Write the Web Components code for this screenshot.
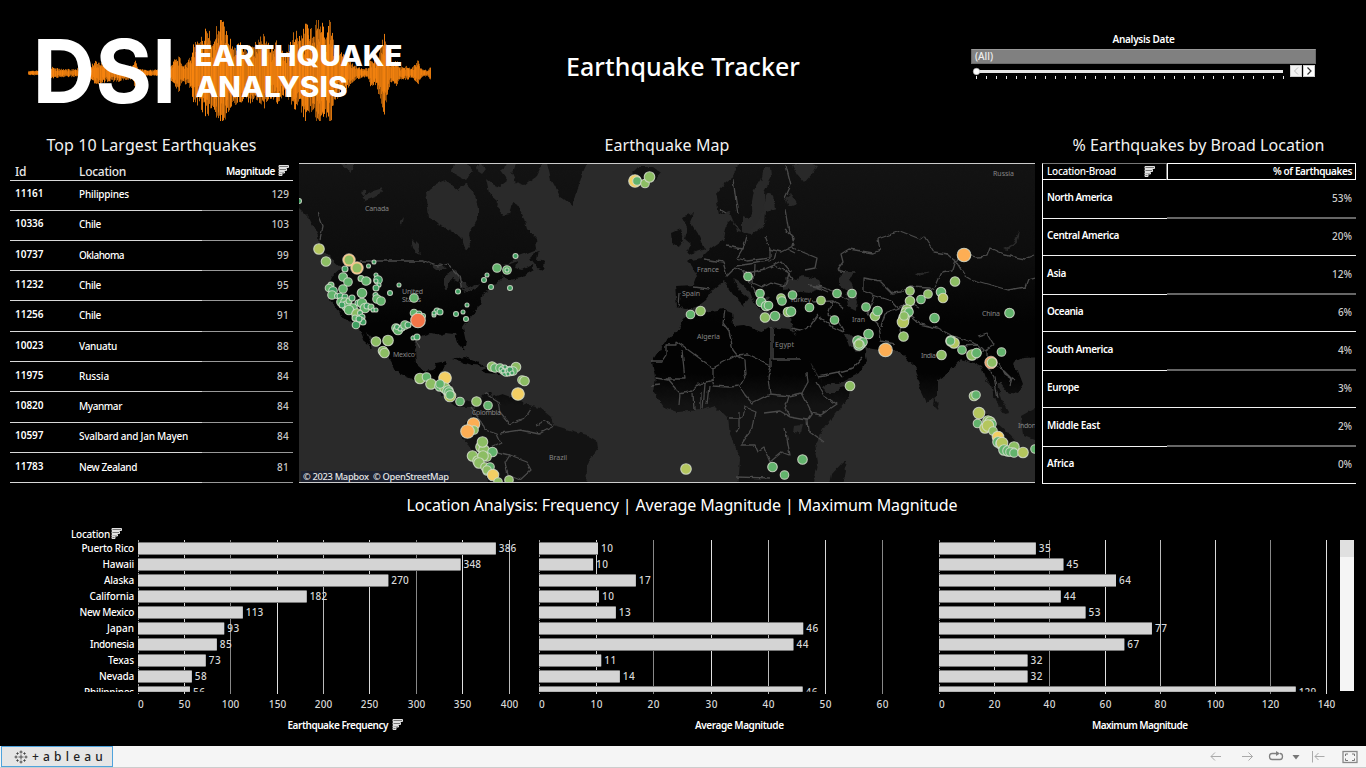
<!DOCTYPE html>
<html lang="en">
<head>
<meta charset="utf-8">
<title>Earthquake Tracker</title>
<style>
html,body{margin:0;padding:0;background:#000}
body{width:1366px;height:768px;overflow:hidden;color:#fff;font:500 10px/14px "Noto Sans","Open Sans",sans-serif}
</style>
</head>
<body>
<quake-dashboard></quake-dashboard>
<script>
const define = (name, css, render, after) => customElements.define(name, class extends HTMLElement {
  connectedCallback() {
    if (this.shadowRoot) return;
    this.attachShadow({ mode: 'open' }).innerHTML = `<style>${css}</style>${render(this)}`;
    if (after) after(this);
  }
});

/* Inline label whose tracking is adjusted so it takes the given width */
define('fit-text', ':host{display:inline-block;white-space:nowrap}span{display:inline-block}',
  () => '<span><slot></slot></span>',
  el => {
    const w = +el.getAttribute('w');
    if (!w) return;
    const natural = el.shadowRoot.querySelector('span').getBoundingClientRect().width;
    el.style.letterSpacing = ((w - natural) / el.textContent.length).toFixed(3) + 'px';
  });
const fit = (t, w) => `<fit-text w="${w}">${t}</fit-text>`;

define('sort-icon', ':host{display:inline-block;width:11px;height:11px}svg{display:block}',
  () => `<svg width="11" height="11" viewBox="0 0 11 11"><g fill="#777" stroke="#e2e2e2" stroke-width="1"><path d="M1 .5H10.5V2.5H1zM1 3.5H8.5V5.5H1zM1 6.500H6.500V8H1zM1 8.500H4V10.500H1z"/></g></svg>`);

/* Logo: seismic trace behind the wordmark */
define('dsi-logo', ':host{display:block;width:440px;height:130px}svg{display:block;font-family:Inter,"Noto Sans",sans-serif;fill:#fff}',
  () => {
    const env = [[28,2],[45,3],[52,6],[60,4],[75,4],[90,7],[96,12],[105,9],[118,9],[125,7],[133,8],[135,16],[138,4],[150,3],[165,4],[171,7],[175,14],[179,19],[183,9],[187,12],[191,18],[193,30],[200,34],[207,46],[212,34],[217,46],[219,56],[222,56],[227,40],[233,33],[240,30],[247,28],[255,30],[263,38],[270,26],[277,32],[284,22],[291,30],[295,46],[300,34],[306,50],[313,44],[318,60],[321,60],[325,38],[329,60],[331,56],[334,28],[340,22],[346,17],[354,8],[363,4],[368,5],[371,14],[376,12],[381,28],[385,43],[388,20],[391,9],[396,14],[400,6],[407,7],[412,5],[418,13],[421,5],[428,3],[430,7]];
    let s = 7, rnd = () => (s = (s * 16807) % 2147483647) / 2147483647, out = '';
    for (let x = 28.5; x < 431; x += 1) {
      let i = 1; while (i < env.length - 1 && env[i][0] < x) i++;
      const [x0, a0] = env[i - 1], [x1, a1] = env[i], a = a0 + (a1 - a0) * Math.min(1, (x - x0) / (x1 - x0));
      const seg = (lo, hi, op) => {
        const u = Math.min(53, a * (lo + hi * rnd())), d = Math.min(48, a * (lo + hi * rnd()));
        out += `<path d="M${x} ${(73 - u).toFixed(1)}V${(73 + d).toFixed(1)}" stroke="#f9850f" opacity="${op.toFixed(2)}"/>`;
      };
      seg(.7, .36, .5 + .5 * rnd());
      seg(.4, .4, .7);
    }
    return `<svg width="440" height="130" viewBox="0 0 440 130">${out}
    <text x="32.500" y="103" font-size="88" font-weight="700" textLength="144" lengthAdjust="spacingAndGlyphs">DSI</text>
    <text x="194.500" y="65.500" font-size="28.500" font-weight="800" textLength="208" lengthAdjust="spacingAndGlyphs">EARTHQUAKE</text>
    <text x="195.500" y="97" font-size="28.500" font-weight="800" textLength="152" lengthAdjust="spacingAndGlyphs">ANALYSIS</text></svg>`;
  });

define('date-filter', `:host{display:flex;flex-direction:column;width:345px}
.t{font-weight:600;text-align:center;height:17px;line-height:15px}
.in{box-sizing:border-box;height:15px;background:#808080;border:1px solid #6a6a6a;border-top-color:#999;padding-left:3px;line-height:13px;color:#eee}
.row{display:flex;gap:1px}svg{display:block}`,
  () => {
    let ticks = '';
    for (let i = 0; i < 32; i++) ticks += `<rect x="${(5 + i * 9.89).toFixed(0)}" y="12" width="1" height="3"/>`;
    return `<div class="t">${fit('Analysis Date', 62)}</div><div class="in">${fit('(All)', 18)}</div>
    <div class="row"><svg width="345" height="16" viewBox="0 0 345 16"><g fill="#e6e6e6"><rect x="6" y="6" width="306" height="3"/>${ticks}</g>
    <circle cx="5.500" cy="7.500" r="3.200" fill="#fff" stroke="#bbb" stroke-width=".6"/>
    <rect x="319.500" y="1.500" width="11" height="11" fill="#f3f3f3" stroke="#ccc"/><rect x="332.500" y="1.500" width="11" height="11" fill="#fff" stroke="#ccc"/>
    <path d="M327 3.500L323.500 7L327 10.500" fill="none" stroke="#bbb"/><path d="M336.500 3.500L340 7L336.500 10.500" fill="none" stroke="#333" stroke-width="1.200"/></svg></div>`;
  });

define('panel-title', ':host{display:block;height:33px;line-height:31px;font-size:16px;font-weight:400;text-align:center;color:#f2f2f2}', () => '<slot></slot>');

define('top-table', `:host{display:block;width:283px}
.r{display:grid;grid-template-columns:64px 128px 91px;height:30.270px;align-items:stretch}
.r>*{box-sizing:border-box;border-bottom:1px solid #d8d8d8;padding-left:5px;line-height:30.500px}
.r .m{border-color:#999;text-align:right;padding:0 4px 0 0;color:#c8c8c8}
.r .i{font-weight:600;line-height:29.500px}
.h{height:16.200px}.h>*{line-height:17px!important;font-size:12px;color:#e8e8e8;font-weight:500}.h .m{font-size:10px;font-weight:600;color:#fff;border-color:#ddd;display:flex;justify-content:flex-end;gap:3px;line-height:17px!important}.h sort-icon{margin-top:2px}`,
  () => {
    const rows = [['11161','Philippines',50,129],['10336','Chile',22,103],['10737','Oklahoma',45,99],['11232','Chile',22,95],['11256','Chile',22,91],['10023','Vanuatu',38,88],['11975','Russia',30,84],['10820','Myanmar',43,84],['10597','Svalbard and Jan Mayen',109,84],['11783','New Zealand',58,81]];
    return `<div class="r h"><div>${fit('Id', 11)}</div><div>${fit('Location', 47)}</div><div class="m">${fit('Magnitude', 49)}<sort-icon></sort-icon></div></div>` +
      rows.map(([i, l, w, m]) => `<div class="r"><div class="i">${fit(i, 28.5)}</div><div>${fit(l, w)}</div><div class="m">${fit(m, m > 99 ? 17.5 : 12)}</div></div>`).join('');
  });

define('share-table', `:host{display:block;width:314px}
.r{display:grid;grid-template-columns:125px 189px;height:37.980px}
.r>*{box-sizing:border-box;border-bottom:1px solid #f2f2f2;line-height:37px;padding-left:4px}
.r .l{border-left:1px solid #fff;font-weight:600}.r .v{text-align:right;padding-right:4px;color:#ccc;line-height:38px}
.r.thick .v{border-bottom:2px solid #666}
.h{height:16px}.h .l{border:1px solid #777;border-left-color:#fff;border-bottom-color:#fff;display:flex;justify-content:space-between;padding-right:11px;line-height:15px;font-weight:500}.h .l sort-icon{margin-top:2px}
.h .v{border:1px solid #fff;line-height:15px;font-weight:600;color:#fff;padding-right:3px}`,
  () => {
    const rows = [['North America',65,53],['Central America',72,20],['Asia',19,12],['Oceania',36,6],['South America',66,4],['Europe',32,3],['Middle East',53,2],['Africa',27,0]];
    return `<div class="r h"><div class="l">${fit('Location-Broad', 69)}<sort-icon></sort-icon></div><div class="v">${fit('% of Earthquakes', 79)}</div></div>` +
      rows.map(([l, w, v], i) => `<div class="r${i % 2 ? '' : ' thick'}"><div class="l">${fit(l, w)}</div><div class="v">${fit(v + '%', v > 9 ? 20 : 14)}</div></div>`).join('');
  });

/* World map with the epicentres */
const C = { d: '#3e9f61', g: '#62b36c', y: '#8cbd63', l: '#b4c65e', e: '#f3cf63', o: '#fdae54', r: '#f47448' };
const QUAKES = `299 201 2.5 d,319 249 5 l,326 261.500 4.500 y,345 276 2 d,345 269 3 d,349 260 6 O,357 268 6 O,374 262 2 d,368.500 266 2 d,343 277 4 g,361 278.500 3 g,368 281 3 d,366 281 4 g,376 275 2 d,378 280 4 d,376 281 2 d,379 285 2 d,376 288 3 d,390 293 2.500 d,399 285 2 d,348 282 4 g,343 289 4 g,331 285 3 g,329 288 3.500 g,333 291 4 d,332 295 4 g,337 296 2.500 d,340 296 3 d,345 297 3 d,362 293 4.500 g,375.500 295 2.500 d,377 299 4 g,381 301 4 g,414 298 4 g,341 302 4 g,345 302 4 g,347 306 5 g,349 301 3 g,352 298 3 d,342 305 3 d,358 303 3 d,353 308 4 g,349 310 4.500 g,362 303 4.500 g,365 308 4.500 g,367 306 3 d,371 307 3 g,373 310 2 d,376 310 2 d,357 314 5 y,355 318 3 g,360 313 2.500 d,362 317 3 d,361 320 3 d,356 325 3.500 d,363 322 3 d,359 319 3 d,414 313 3.500 g,419 314 3 d,423 316 2.500 d,418 320.500 7 r,434 315 2 d,437 311 3 d,440 312 3 d,434 313 2 d,456 314 2.500 d,463 312 2 d,467 305 2 d,466 319 2.500 d,458 291.500 2.500 d,484 280 2.500 d,487 275 2 d,491 287 2.500 d,497 268 4 g,507 270 4 g,507 270 2 d,515.500 256 2.500 d,510 288 2.500 d,396 328 4 g,398 330 4.500 g,402 328 3 d,405 325 4 g,408 325 3 d,397 327 2.500 d,400 329 2 d,413 338 2 d,417 337 3 d,376 341.500 4.500 y,388 340.500 5 y,383 351 4.500 y,384.500 353 4.500 y,420 378.500 5 y,426.500 377 4 g,445 378 6 e,431 384 5 y,440 386 5 g,445 388 5 y,448 391 5 g,450 396 5.500 l,449 392 4 g,450 395 4 g,440 384 4 g,460 401.500 4 g,476.500 401.500 4.500 y,488 405.500 4 g,492 366.500 4.500 y,495 368 4 g,516 367 4.500 y,500 368 4 g,504 370 4.500 g,506 372 4 d,510 371 4.500 d,513 371 4 g,510 370 3 d,505 367 2 d,501 369 2 d,508 374 2 d,512 373 2 d,503 371 2 d,522 380 4 y,524.500 381 4.500 y,518 394 6 e,473.500 424 6 o,474 430 4 y,467.500 431.500 6.500 o,481 447 5 y,484 450 5 y,482.500 442 5 y,492.500 452 4.500 g,487 457 4 y,472.500 456 5 y,478 461 5 y,483 456 5 y,479 463 5 y,485 467 4 y,487 471 4 g,490 467 4 g,487 470 4 y,493 475 5.500 e,498 482 4 y,509 480 4 y,635 181 6 e,637 181 4 g,645 183.500 4 y,649.500 177 5 y,748 276.500 4 g,690.500 314.500 4 g,700.500 311 4.500 y,760 293.500 4 g,761 302 4.500 g,766 306 4.500 g,768.500 305.500 4 g,781 298 4 y,782 301 4 g,765 317.500 4.500 y,775 316 4.500 g,788 312 4.500 y,791 311.500 4.500 g,792.500 295 4 g,809.500 307.500 4 g,821 300.500 4 y,837 293.500 4 g,852 293.500 4 g,834.500 320 4 g,866 307 4 g,875 316 4.500 y,877.500 311 4.500 g,910 291 4 y,910 301 4.500 y,921 299.500 4 g,928 294 4 y,941 292 4.500 g,943 298 4.500 l,955 281.500 4.500 y,964 255 6.500 o,1009.500 313 4.500 g,907 310 5 y,906 313 5 y,909 312 4 g,904 318 5 y,903 322 5.500 l,904 316 4 y,934.500 318 4.500 g,903.500 336.500 4.500 y,868.500 334 4.500 g,858 341 5 g,861 343 5 y,863 342 4 g,859 345 5 g,859 344 4 y,885.500 350 6.500 o,941.500 355 4.500 y,951 341 5 g,954 343 5 l,950.500 341 4 g,962 350 4 g,972 355 5 y,976.500 353 4.500 g,1001.500 352 4 g,991 362.500 6 P,992 362.500 4.500 y,974 396 4.500 y,976 395 4 g,979 413 5.500 l,977.500 423.500 4 g,988 421 5 y,990 422 5 y,992 424 4 g,985 428 5 l,988 425.500 5.500 l,993 431 4 y,998 437 5.500 e,998 442 5 g,1001 444 5 g,1002 443 5.500 l,1004 450 5 g,1008 451 5 g,1014 447 5 y,1013 452 4 g,1010 452 4 g,1014 453 4 g,1023 452.500 5 l,1035 449 4 g,850 386 4.500 y,802.500 459.500 4.500 g,772.500 467 4.500 g,784.500 475 4 g,686 469 5 l`;
define('quake-map', ':host{display:block;width:736px;height:320px}svg{display:block;font:7px "Noto Sans",sans-serif}',
  () => {
    const land = [
      /* Americas */
      'M290 155H520L500 170 508 181 500 187 492 184 486 179 489 193 498 201 497 208 503 215 509 214 512 203 519 207 523 215 527 229 536 239 537 249 527 253 518 256 511 262 502 266 513 263 517 261 515 267 523 269 532 264 534 270 520 278 510 280 503 277 495 284 488 291 483 294 480 304 476 311 469 319 463 328 466 342 464 350 459 345 455 334 446 333 440 335 431 333 422 336 417 340 415 350 416 364 424 371 433 370 436 363 446 361 443 370 437 377 447 376 451 383 453 392 460 403 470 401 477 405 483 396 491 391 493 397 502 394 514 398 528 405 540 408 551 417 553 425 570 430 587 435 597 441 598 449 590 460 587 466 586 490H492L482 467 472 451 463 437 466 424 473 417 474 407 465 407 456 407 446 399 438 390 424 384 407 377 395 371 390 361 383 353 375 342 366 332 372 348 365 342 360 330 352 323 342 317 337 308 330 299 328 288 332 277 342 268 331 258 319 247 318 236 309 218 299 208 290 204Z',
      'M520 155H547L537 176 524 186 516 183 512 174Z',
      'M545 155H591L583 172 578 188 573 206 560 196 551 180Z',
      'M530 259L539 250 537 260 545 262 543 270 537 268Z','M452 359L464 357 474 361 485 366 472 365 460 361Z','M482 369L492 365 505 370 498 374 485 373Z',
      /* Europe and Asia */
      'M743 155H1045V357L1022 358 1013 363 1018 371 1023 384 1017 394 1007 392 1001 384 997 384 1003 402 1009 413 1005 414 995 401 991 384 985 378 981 366 973 362 961 359 948 373 937 381 937 396 927 403 920 388 914 366 904 357 899 351 879 350 867 348 858 342 849 334 845 334 849 346 857 352 864 347 867 361 858 374 839 384 826 390 818 374 804 352 793 329 791 317 782 313 772 314 767 304 769 296 761 300 766 313 755 305 750 292 738 281 733 278 740 291 749 298 744 306 734 296 724 281 715 288 706 300 697 307 686 309 677 306 675 286 694 285 697 277 692 266 687 261 701 258 711 248 724 239 727 224 732 220 736 231 752 234 765 225 766 211 776 208 774 196 767 193 763 204 748 220 743 234 735 225 729 211 719 215 716 197 721 187 732 178Z',
      'M672 243L671 233 680 229 683 239 679 247Z','M682 217L694 213 690 222 700 237 705 249 687 255 691 244 685 239 688 229Z',
      'M632 173L638 167 654 167 661 172 655 179 646 182 635 178Z',
      /* Africa */
      'M688 310L698 313 724 309 732 312 733 326 744 325 761 332 769 327 789 329 798 337 807 354 813 369 822 382 829 391 850 386 849 397 837 413 824 428 815 443 818 464 812 490H738L740 459 730 435 728 418 716 406 700 410 678 412 664 407 653 392 655 377 652 362 665 342 679 329Z',
      'M829 490L832 474 842 463 845 461 846 471 842 490Z','M934 398L939 403 937 409 933 405Z','M979 409L989 416 1007 432 1021 447 1023 456 1014 454 996 440Z','M1021 416L1035 408V440L1023 435Z'
    ];
    const water = ['M426 192L437 184 446 180 458 190 466 184 475 194 478 209 478 219 469 234 471 244 466 251 461 237 450 230 438 225 429 217Z',
      'M444 276L455 270 461 277 458 281 452 278 446 290 444 286ZM459 282L465 282 469 290 461 288ZM430 264L441 264 447 270 437 270ZM463 291L480 283 478 287 464 293ZM362 197L373 191 383 188 378 196 365 201ZM340 164L355 163 350 173ZM411 238L418 245 420 256 413 248ZM400 221L404 216 402 226ZM366 197L362 192 366 190ZM467 163L473 171 466 180 452 172 454 163ZM480 163L486 169 482 174 476 170Z',
      'M742 216L752 220 751 207 754 190 762 177 764 168 771 167 772 177 764 192 765 206 756 225 748 233 742 232ZM782 291L786 277 795 280 804 275 818 280 822 288 808 293 792 290ZM839 278L846 271 856 271 849 278 853 287 857 301 856 310 848 306 846 291 839 285ZM792 165L808 163 817 166 812 174 804 183 797 175ZM785 198L791 193 797 204 789 207ZM1003 249L1013 244 1020 230 1018 242 1008 250ZM915 274L931 271 918 277ZM794 426L802 425 800 433 793 432ZM822 386L850 380 836 393 826 393Z'];
    const borders = 'M360 261H423L438 266 447 263 459 276 462 290M318 213L323 226 320 240M413 335L420 348M470 407L481 421 485 430 497 434 501 443 484 451M498 452L510 455 505 463 508 475 520 480 531 470 526 461 510 455M485 393L498 401 500 413 509 424 525 418 531 409M553 426L545 421 536 425M501 433L520 430 539 434 552 427M676 342V345H666V355L662 361H652M676 341L713 368 737 355 733 350 729 331 723 323 725 310M682 350L685 379H666M713 368L713 380 699 384 692 391 680 394 679 405M737 355L747 354 771 366V328M773 328V359H800M737 355L745 360 746 375 740 386 728 387 713 386 711 379M771 366L768 378 770 394 752 403 745 395 740 387M709 386L707 404M693 393L694 410M729 418H743L745 407 755 411 752 429 741 445H755L758 452 764 448 770 462M770 394L789 396 802 393 808 382 807 373M802 393L812 413 821 415 837 404 824 396 816 382M812 413L807 420 808 430 824 442M807 420L790 417 780 411 764 413M770 462L782 452 790 455 785 428M736 477L770 478M703 259L723 262 727 276 735 268 747 273 765 269 774 265 786 272M727 246L743 249 747 235M743 248L737 258 747 261 770 258 770 248 765 236M769 249L781 252 795 245 790 233 786 209M736 266L756 263 774 260 776 253M754 265L753 283 762 287 771 282 785 286 790 271 782 261 770 267M741 270L750 281 756 293M747 272L749 284M733 179L736 202 738 214M694 287L710 289M680 293L679 306M828 292L817 287 809 285 822 287 836 292 849 300M837 270L843 262 841 254 849 249 873 253 880 250 878 239 900 231 920 239 924 236 934 252 947 254 955 261 963 257M837 270L845 272M863 292V278L880 281 892 293 901 292 910 286 929 287 935 290M935 288L942 272 952 270 955 260 965 276 970 279 1008 290 1025 287 1028 279 1035 277M963 254L977 257 987 256 990 248 1005 255 1025 259 1035 255M863 291L876 296 891 301 898 309 908 302 919 308M874 296L868 314 878 324 880 333 881 341 895 344M898 309L885 314 881 326M905 311L920 324 937 328 953 336 966 340 979 345M907 315L900 330 903 341M953 336L950 341 963 346 969 357M962 346L979 345 984 350 977 359M985 351L994 345 987 333 978 336M987 350L987 365 994 377 998 398M993 365L1002 369 1012 379 1010 386M999 363L1005 374 1014 380M812 302L833 301 844 309M833 301L828 314 839 323 844 332M818 315L810 326 800 330 791 328M820 317L833 327 843 332M819 376L838 372 853 368 863 357M838 372L842 377M786 165L791 185 785 198M785 230L794 238 793 248 817 258 815 268 805 270M785 270L793 280M787 249L795 253M656 378L668 380 675 388 680 393M652 385L660 384M701 409V393M705 384L703 409M739 411V428L735 432M789 396L785 409 790 417M720 210L725 213';
    const labels = [['Canada',365,211,24],['United',402,294,21],['States',402,302,19],['Mexico',393,357,22],['Colombia',472,415,29],['Brazil',549,460,18],['France',697,272,22],['Spain',682,296,18],['Algeria',697,339,23],['Egypt',775,347,19],['Turkey',790,302,21],['Iran',852,322,13],['Russia',993,176,21],['China',982,316,18],['India',921,358,15],['Indon',1018,428,18]];
    const dots = QUAKES.split(',').map(q => {
      const [x, y, r, c] = q.trim().split(' ');
      if (c === 'O' || c === 'P') return `<circle cx="${x}" cy="${y}" r="6.300" fill="${c === 'O' ? '#f6c588' : '#f4a070'}" stroke="#ddd8c4" stroke-width=".6"/><circle cx="${x}" cy="${y}" r="4.500" fill="${C.y}"/>`;
      return `<circle cx="${x}" cy="${y}" r="${+r + (r < 3.2 ? 0 : .3)}" fill="${C[c]}" stroke="#d3dccb" stroke-opacity=".85" stroke-width="1.100"/>`;
    }).join('');
    return `<svg width="736" height="320" viewBox="299 163 736 320">
    <defs><linearGradient id="sh" x1="0" y1="163" x2="0" y2="483" gradientUnits="userSpaceOnUse"><stop offset="0" stop-color="#131313"/><stop offset=".3" stop-color="#0d0d0d"/><stop offset=".5" stop-color="#030303"/><stop offset=".66" stop-color="#030303"/><stop offset=".76" stop-color="#131313"/><stop offset="1" stop-color="#131313"/></linearGradient>
    <filter id="rough" x="0" y="0" width="1" height="1" color-interpolation-filters="sRGB"><feTurbulence type="fractalNoise" baseFrequency=".15" numOctaves="3" seed="4"/><feDisplacementMap in="SourceGraphic" scale="5" xChannelSelector="R" yChannelSelector="G"/></filter>
    <filter id="rough2" x="0" y="0" width="1" height="1" color-interpolation-filters="sRGB"><feTurbulence type="fractalNoise" baseFrequency=".12" numOctaves="2" seed="9"/><feDisplacementMap in="SourceGraphic" scale="4" xChannelSelector="R" yChannelSelector="G"/></filter></defs>
    <rect x="299" y="163" width="736" height="320" fill="#2a2a2a"/>
    <g filter="url(#rough)"><path d="${land.join('')}" fill="url(#sh)"/><path d="${water.join('')}" fill="#292929"/></g>
    <path d="${borders}" fill="none" stroke="#4a4a4a" stroke-width="1.300" stroke-linejoin="round" filter="url(#rough2)"/>
    ${labels.map(([t, x, y, w]) => `<text x="${x}" y="${y}" textLength="${w}" fill="#858585">${t}</text>`).join('')}
    ${dots}
    <rect x="301" y="471" width="149" height="11" fill="#1e2230"/>
    <text x="303" y="480" font-size="9.300" font-weight="500" fill="#e6e6e6" textLength="66">© 2023 Mapbox</text><text x="373" y="480" font-size="9.300" font-weight="500" fill="#e6e6e6" textLength="76">© OpenStreetMap</text>
    <path d="M299 163.500H1035M299 482.500H1035" stroke="#ccc"/></svg>`;
  });

/* Horizontal bar chart: values, gridlines, axis and its title */
define('bar-chart', ':host{display:block}svg{display:block;overflow:visible;font:500 10px "Noto Sans",sans-serif}',
  el => {
    const a = n => el.getAttribute(n), step = +a('step'), n = +a('ticks'), px = +a('px'), k = px / step;
    const vals = a('values').split(','), labels = a('labels').split(','), id = 'c' + step;
    const tw = t => [0, 6, 12, 17.5][String(t).length];
    let grid = '', ax = '', bars = '';
    for (let i = 0; i <= n; i++) {
      const x = Math.round(i * px - .3) + .5, t = i * step;
      grid += i ? `<path d="M${x} 0V154" stroke="${['#bbb', '#d8d8d8', '#888', '#e0e0e0'][i % 4]}"/>` : `<path d="M.5 0V154" stroke="#999" stroke-dasharray="2 1"/>`;
      ax += `<text x="${(i ? x : 3) - tw(t) / 2}" y="168" textLength="${tw(t)}" fill="#d8d8d8">${t}</text>`;
    }
    vals.forEach((v, i) => {
      const w = v * k;
      bars += `<rect x="0" y="${2 + i * 16}" width="${w.toFixed(1)}" height="13" fill="#777"/><rect x="0" y="${3 + i * 16}" width="${w.toFixed(1)}" height="11" fill="#d4d4d4"/><text x="${(w + 3).toFixed(1)}" y="${12 + i * 16}" textLength="${tw(labels[i])}" fill="#d8d8d8">${labels[i]}</text>`;
    });
    return `<svg width="${a('w')}" height="200"><defs><clipPath id="${id}"><rect x="-1" y="0" width="440" height="151.700"/></clipPath></defs>${grid}<g clip-path="url(#${id})">${bars}</g>${ax}
    <text x="${a('tx')}" y="189" font-weight="600" fill="#fff" textLength="${a('tw')}">${a('name')}</text></svg>`;
  });

define('location-analysis', `:host{display:block;height:259px}
panel-title{height:37px;line-height:37px;color:#fff;padding-right:2px}
.hd{display:flex;height:16px;padding-left:71px;line-height:20px;gap:1px}.hd sort-icon{margin-top:4px}
.body{display:grid;grid-template-columns:138px 401px 400px 401px 26px}
ul{list-style:none;margin:0;padding:0 4px 0 0;text-align:right;height:151.500px;overflow:hidden}li{height:16px;line-height:17px;color:#fff}
.sb{width:14px;height:151px;background:#f5f5f5}.sb i{display:block;height:17px;background:#e0e0e0}
.q{display:grid;grid-template-columns:1fr}.q>*{grid-area:1/1}.q sort-icon{margin:179px 0 0 254px}`,
  () => {
    const rows = [['Puerto Rico',52.5],['Hawaii',31.5],['Alaska',30],['California',44.5],['New Mexico',54.5],['Japan',27],['Indonesia',44],['Texas',26],['Nevada',35],['Philippines',50]];
    return `<panel-title>${fit('Location Analysis: Frequency | Average Magnitude | Maximum Magnitude', 551)}</panel-title>
    <div class="hd">${fit('Location', 39)}<sort-icon></sort-icon></div>
    <div class="body"><ul>${rows.map(r => `<li>${fit(r[0], r[1])}</li>`).join('')}</ul>
    <div class="q"><bar-chart w="385" step="50" ticks="8" px="46.350" values="386,348,270,182,113,93,85,73,58,56" labels="386,348,270,182,113,93,85,73,58,56" name="Earthquake Frequency" tx="149.500" tw="101"></bar-chart><sort-icon></sort-icon></div>
    <bar-chart w="380" step="10" ticks="6" px="57.300" values="10.3,9.45,16.9,10.45,13.4,46.1,44.4,10.85,14.1,46" labels="10,10,17,10,13,46,44,11,14,46" name="Average Magnitude" tx="156" tw="89"></bar-chart>
    <bar-chart w="390" step="20" ticks="7" px="55.300" values="35,45,64,44,53,77,67,32,32,129" labels="35,45,64,44,53,77,67,32,32,129" name="Maximum Magnitude" tx="153" tw="96"></bar-chart>
    <div class="sb"><i></i></div></div>`;
  });

define('viz-toolbar', `:host{display:flex;box-sizing:border-box;height:22px;background:#f5f5f5;border-bottom:1px solid #ccc;justify-content:space-between;padding-left:1px}
.b{box-sizing:border-box;width:112px;height:21px;border:1px solid #4fa3dc;background:#e6e6e6;display:flex;align-items:center;padding-left:12px;color:#222}
.b fit-text{font:500 12px/18px "Noto Sans",sans-serif;margin-left:4px}svg{display:block}`,
  () => `<div class="b"><svg width="14" height="14" viewBox="0 0 14 14"><path d="M7 4.500V9.500M4.500 7H9.500M7 .5V3.500M5.500 2H8.500M7 10.500V13.500M5.500 12H8.500M2 5.500V8.500M.5 7H3.500M12 5.500V8.500M10.500 7H13.500M3.500 2.300V4.700M2.300 3.500H4.700M10.500 2.300V4.700M9.300 3.500H11.700M3.500 9.300V11.700M2.300 10.500H4.700M10.500 9.300V11.700M9.300 10.500H11.700" stroke="#444" stroke-width=".9"/></svg>${fit('+ableau', 75)}</div>
  <svg width="166" height="21" viewBox="1200 746 166 21" fill="none" stroke="#aaa"><path d="M1221 756.500H1211M1215 752.500L1211 756.500L1215 760.500M1242 756.500H1252.500M1248.500 752.500L1252.500 756.500L1248.500 760.500"/>
  <path d="M1278 753.500H1272Q1269.500 753.500 1269.500 756.500T1272 759.500H1280Q1282.500 759.500 1282.500 756.500T1280 753.500" stroke="#808080" stroke-width="1.300"/><path d="M1276 751V756L1280 753.500Z" fill="#808080" stroke="none"/>
  <path d="M1292.500 755H1299.500L1296 759.500Z" fill="#777" stroke="none"/><path d="M1312.500 751V762.500M1324.500 756.500H1315M1318.500 753L1315 756.500L1318.500 760"/>
  <rect x="1343" y="751.500" width="14" height="11" stroke="#888" stroke-width="1.300"/><path d="M1345.500 756V754H1348M1352 754H1354.500V756M1354.500 758.500V760.500H1352M1348 760.500H1345.500V758.500" stroke="#777"/></svg>`);

define('quake-dashboard', `:host{display:grid;grid-template-rows:130px 357px 259px 22px;width:1366px;height:768px;background:#000}
header{display:grid;grid-template-columns:566px 405px 345px}header h1{margin:0;font-size:25px;font-weight:500;line-height:133px}
dsi-logo{height:130px}date-filter{margin-top:32px}
main{display:grid;grid-template-columns:283px 736px 314px;column-gap:6px;padding-left:10px}
main section:nth-child(3){margin-left:1px}`,
  () => `<header><dsi-logo></dsi-logo><h1>${fit('Earthquake Tracker', 234)}</h1><date-filter></date-filter></header>
  <main><section><panel-title>${fit('Top 10 Largest Earthquakes', 210)}</panel-title><top-table></top-table></section>
  <section><panel-title>${fit('Earthquake Map', 125)}</panel-title><quake-map></quake-map></section>
  <section><panel-title>${fit('% Earthquakes by Broad Location', 252)}</panel-title><share-table></share-table></section></main>
  <location-analysis></location-analysis><viz-toolbar></viz-toolbar>`);
</script>
</body>
</html>
